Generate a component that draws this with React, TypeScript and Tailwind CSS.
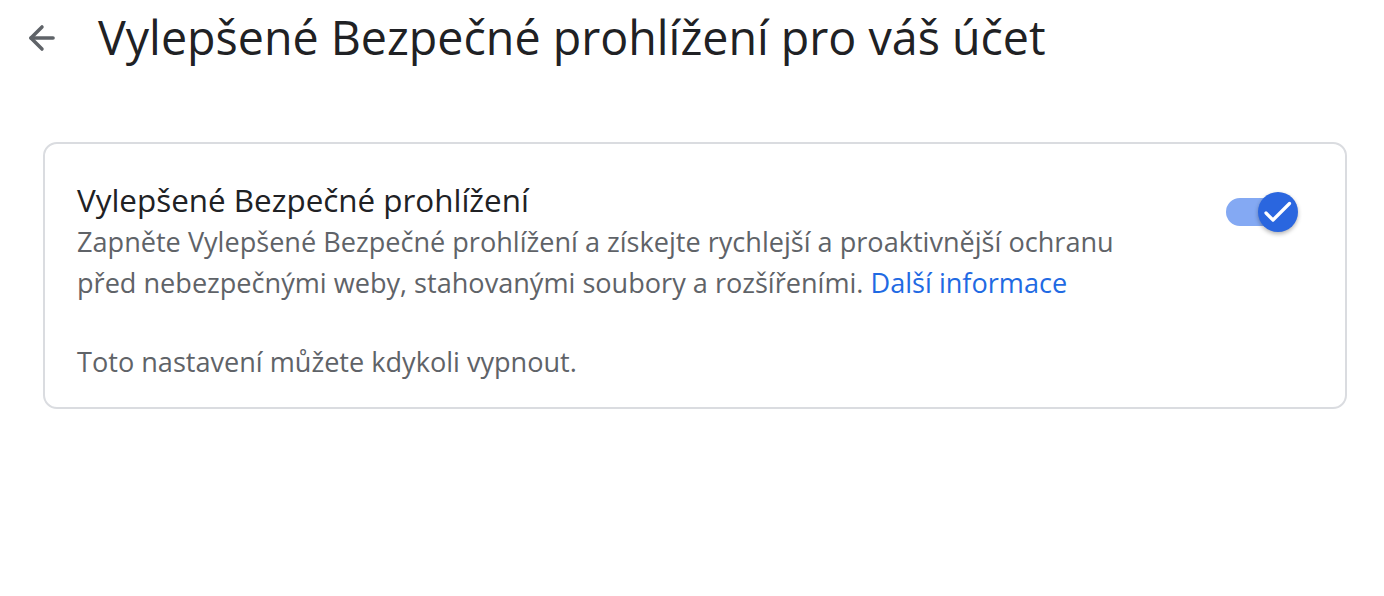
import { ArrowLeft } from "lucide-react";

// Toggle switch, checked state
const Toggle = () => {
  return (
    <div className="relative w-[76px] h-[44px] flex items-center">
      <div className="ml-[2px] w-[52px] h-[28px] rounded-full bg-[#84a9f3]" />
      <div className="absolute right-[2px] top-[2px] w-[40px] h-[40px] rounded-full bg-[#2a66df] shadow-[0_2px_4px_rgba(0,0,0,0.3)]">
        <svg width="40" height="40" viewBox="0 0 40 40" fill="none">
          <path d="M8 21l7 7L31.5 11.5" stroke="white" strokeWidth="3.2" strokeLinecap="round" strokeLinejoin="round" />
        </svg>
      </div>
    </div>
  );
};

export default function App() {
  return (
    <div className="min-h-screen bg-white font-['Open_Sans',sans-serif]">
      <header className="flex items-center h-[76px] pl-[22px]">
        <button className="w-[40px] h-[40px] flex items-center justify-center text-[#5f6368]">
          <ArrowLeft size={38} strokeWidth={2.2} />
        </button>
        <h1 className="ml-[36px] text-[46.6px] text-[#202124]">
          Vylepšené Bezpečné prohlížení pro váš účet
        </h1>
      </header>
      <main className="pl-[43px] pr-[37px] pt-[66px]">
        <section className="border-2 border-[#dadce0] rounded-[14px] pl-[32px] pr-[45px] pt-[34px] pb-[25px] flex justify-between">
          <div className="w-[1080px]">
            <h2 className="text-[31.4px] leading-[43px] text-[#202124]">Vylepšené Bezpečné prohlížení</h2>
            <p className="text-[27.1px] leading-[41px] text-[#5f6368]">
              Zapněte Vylepšené Bezpečné prohlížení a získejte rychlejší a proaktivnější ochranu před nebezpečnými weby, stahovanými soubory a rozšířeními.{" "}
              <a href="#" className="text-[#1f6ae3]">Další informace</a>
            </p>
            <p className="mt-[38px] text-[27.1px] leading-[41px] text-[#5f6368]">Toto nastavení můžete kdykoli vypnout.</p>
          </div>
          <div className="pt-[12px]">
            <Toggle />
          </div>
        </section>
      </main>
    </div>
  );
}
